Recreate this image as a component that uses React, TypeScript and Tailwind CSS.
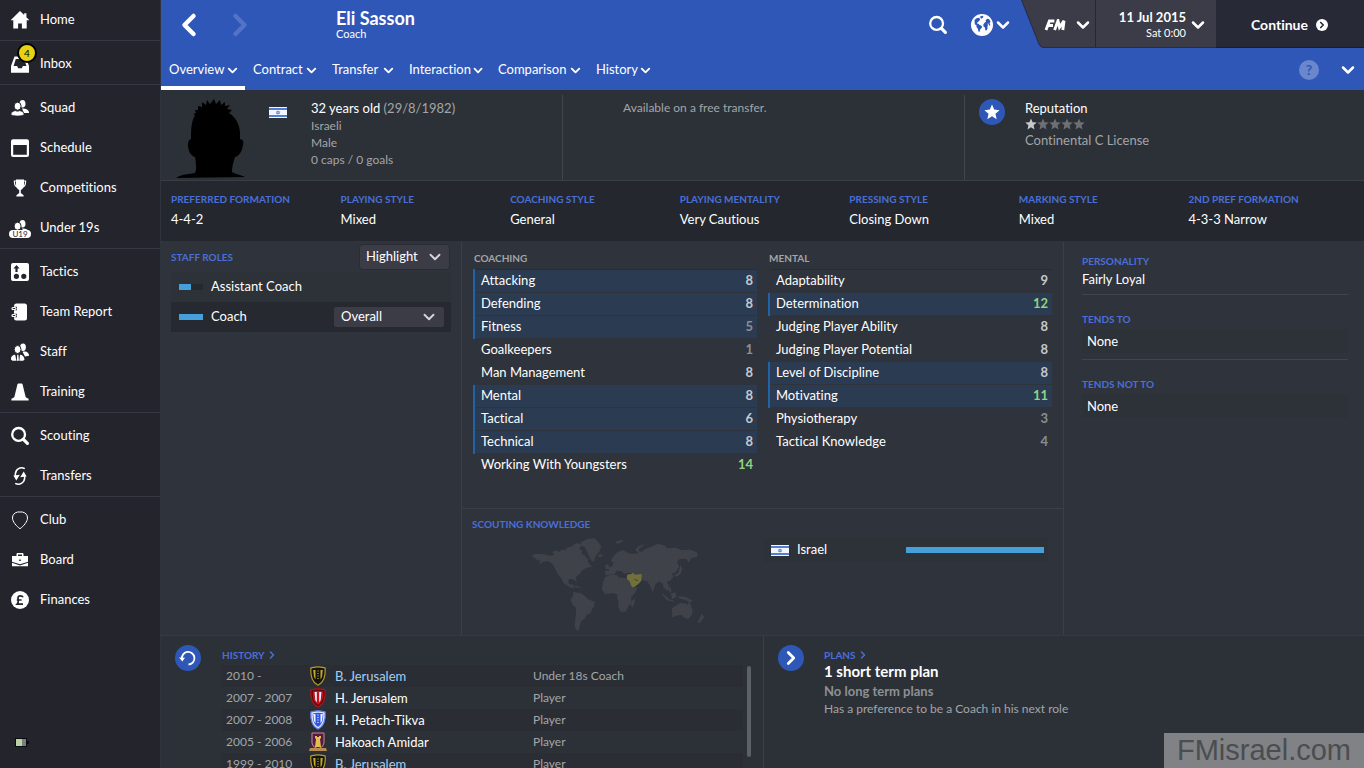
import type { ReactNode } from "react";
import { ChevronDown, ChevronLeft, ChevronRight } from "lucide-react";
import { clsx } from "clsx";

const heading = "text-[10px] leading-4 font-bold uppercase text-[#4a6fd8]";

function Icon({ children, className }: { children: ReactNode; className?: string }) {
  return <svg viewBox="0 0 20 20" fill="currentColor" aria-hidden="true" className={clsx("h-5 w-5 shrink-0", className)}>{children}</svg>;
}

const icons = {
  home: <Icon><path d="M10 1 .6 10.3h2.7V18.6h4.8v-5h3.8v5h4.8v-8.3h2.7L16.4 7.200V3.200h-2.200v1.900z" /></Icon>,
  inbox: <Icon><path fillRule="evenodd" d="M4.500 2.500h11l3.500 9.500v6.800H1V12zM5.800 5 3.600 12h3.600l.9 2.300h3.800l.9-2.300h3.600L14.200 5z" /></Icon>,
  squad: <Icon><ellipse cx="12.500" cy="5.700" rx="3" ry="3.800" /><path d="M12 10.500c4 0 7.200 1.400 7 4.500h-5z" /><ellipse cx="7.600" cy="8.200" rx="3.500" ry="4" stroke="#24242d" /><path stroke="#24242d" strokeWidth=".6" d="M1 16.200c0-2.200 3-3.500 4.800-3.500.7.700 2.700.7 3.400 0 2.500.2 4.800 1.500 4.800 3.500 0 2.300-13 2.300-13 0Z" /></Icon>,
  schedule: <Icon><path fillRule="evenodd" d="M3 1.300h14a2 2 0 0 1 2 2V17a2 2 0 0 1-2 2H3a2 2 0 0 1-2-2V3.300a2 2 0 0 1 2-2zM3.200 7v9.700h13.600V7z" /></Icon>,
  trophy: <Icon><path d="M6 1.500h8v5.200c0 3-1.700 4.500-3.200 5.200v3.200l2.800 2.100v1.300H6.400v-1.300l2.800-2.100v-3.200C7.700 11.200 6 9.700 6 6.700z" /><path d="M6 3H4.400c0 3.500.7 5.500 2.600 5.800M14 3h1.600c0 3.500-.7 5.500-2.600 5.800" fill="none" stroke="currentColor" strokeWidth="1.200" /></Icon>,
  tactics: <Icon><path fillRule="evenodd" d="M3 1h14a2 2 0 0 1 2 2v14a2 2 0 0 1-2 2H3a2 2 0 0 1-2-2V3a2 2 0 0 1 2-2zm3.500 2L3.400 6.500h2V10h2.200V6.500h2zM6.400 11.700a2.600 2.600 0 1 0 0 5.200 2.600 2.600 0 0 0 0-5.200zm7.400 0a2.600 2.600 0 1 0 0 5.200 2.600 2.600 0 0 0 0-5.200z" /></Icon>,
  report: <Icon><rect x="4" y="1.500" width="13" height="17" rx="2.500" /><g fill="none" stroke="#24242d" strokeWidth="3.600"><path d="M2 6.500h5M2 13.500h5" /></g><g fill="none" stroke="currentColor" strokeWidth="1.200"><rect x="2" y="5.500" width="4" height="2" rx="1" /><rect x="2" y="12.500" width="4" height="2" rx="1" /></g></Icon>,
  staff: <Icon><ellipse cx="13" cy="5.200" rx="2.900" ry="3.700" /><path d="M12.500 9.700c4-1 6.800 1.400 6.500 4l-4 .8z" /><ellipse cx="7.600" cy="7.500" rx="3.400" ry="4" stroke="#24242d" /><path d="M1 17.500c-.2-3.200 2-4.800 4.200-4.800L6.400 18.800H2.500zM7.200 12.700h1.200l.5 6.100H6.800zM10 12.700c2.500 0 4.500 2 4.500 5L13 18.800H9.300z" /></Icon>,
  training: <Icon><path d="M8.600 1.600h2.800c.7 0 1 .4 1.200 1L15.400 14c.2.900.6 1.600 1.500 1.900l1.700.8v1.800H1.400v-1.800l1.700-.8c.9-.3 1.300-1 1.500-1.900L7.400 2.600c.2-.6.500-1 1.200-1z" /></Icon>,
  search: <Icon><g fill="none" stroke="currentColor"><circle cx="8.600" cy="8.400" r="6.400" strokeWidth="2.300" /><path d="m13.400 13.400 4 4" strokeWidth="3.200" strokeLinecap="round" /></g></Icon>,
  transfers: <Icon><g fill="none" stroke="currentColor" strokeWidth="1.500"><path d="M14.800 2.700C10.500.3 5.600 3 5.300 8.200c0 1 .1 1.800.4 2.800" /><path d="M5.200 17.300c4.300 2.400 9.200-.3 9.500-5.500 0-1-.1-1.800-.4-2.800" /></g><path d="m3.400 9.500 2.900 5 3.500-5.700zM16.600 10.500l-2.900-5-3.500 5.700z" /></Icon>,
  club: <Icon><path d="M7.500 2h5C16 3 17.500 5 17.500 8c0 3.500-3.800 8.200-7.500 10.700C6.300 16.200 2.500 11.500 2.500 8c0-3 1.500-5 5-6z" fill="none" stroke="currentColor" /></Icon>,
  board: <Icon><path fillRule="evenodd" d="M6.500 4.200c0-.7.500-1.200 1.200-1.200h4.600c.7 0 1.200.500 1.200 1.200V6H18v5.800l-8 2.500-8-2.500V6h4.500zm1.500.4V6h4V4.600zM9.200 9.500v1.600h1.600V9.500z" /><path d="m2 12.800 8 2.600 8-2.600v3.400H2z" /></Icon>,
  finances: <Icon><circle cx="10" cy="10" r="9" /><path d="M13 7.200c-.6-1.500-4.800-2-5 .6 0 1.800 1.100 4.500-.8 6.400H13M6.800 10h4.800" fill="none" stroke="#24242d" strokeWidth="1.700" /></Icon>,
};

const menu: { label: string; icon: ReactNode; badge?: string; tag?: string }[][] = [
  [{ label: "Home", icon: icons.home }],
  [{ label: "Inbox", icon: icons.inbox, badge: "4" }],
  [
    { label: "Squad", icon: icons.squad },
    { label: "Schedule", icon: icons.schedule },
    { label: "Competitions", icon: icons.trophy },
    { label: "Under 19s", icon: icons.squad, tag: "U19" },
  ],
  [
    { label: "Tactics", icon: icons.tactics },
    { label: "Team Report", icon: icons.report },
    { label: "Staff", icon: icons.staff },
    { label: "Training", icon: icons.training },
  ],
  [
    { label: "Scouting", icon: icons.search },
    { label: "Transfers", icon: icons.transfers },
  ],
  [
    { label: "Club", icon: icons.club },
    { label: "Board", icon: icons.board },
    { label: "Finances", icon: icons.finances },
  ],
];

const tabs = [
  { label: "Overview", width: "w-[84px]" },
  { label: "Contract", width: "w-[79px]" },
  { label: "Transfer", width: "w-[77px]" },
  { label: "Interaction", width: "w-[89px]" },
  { label: "Comparison", width: "w-[98px]" },
  { label: "History", width: "w-[70px]" },
];

const styles = [
  ["Preferred Formation", "4-4-2"],
  ["Playing Style", "Mixed"],
  ["Coaching Style", "General"],
  ["Playing Mentality", "Very Cautious"],
  ["Pressing Style", "Closing Down"],
  ["Marking Style", "Mixed"],
  ["2nd Pref Formation", "4-3-3 Narrow"],
];

type Attribute = { name: string; value: number; key?: boolean };

const coaching: Attribute[] = [
  { name: "Attacking", value: 8, key: true },
  { name: "Defending", value: 8, key: true },
  { name: "Fitness", value: 5, key: true },
  { name: "Goalkeepers", value: 1 },
  { name: "Man Management", value: 8 },
  { name: "Mental", value: 8, key: true },
  { name: "Tactical", value: 6, key: true },
  { name: "Technical", value: 8, key: true },
  { name: "Working With Youngsters", value: 14 },
];

const mental: Attribute[] = [
  { name: "Adaptability", value: 9 },
  { name: "Determination", value: 12, key: true },
  { name: "Judging Player Ability", value: 8 },
  { name: "Judging Player Potential", value: 8 },
  { name: "Level of Discipline", value: 8, key: true },
  { name: "Motivating", value: 11, key: true },
  { name: "Physiotherapy", value: 3 },
  { name: "Tactical Knowledge", value: 4 },
];

const history = [
  { years: "2010 -", club: "B. Jerusalem", role: "Under 18s Coach", crest: "black", link: true },
  { years: "2007 - 2007", club: "H. Jerusalem", role: "Player", crest: "red" },
  { years: "2007 - 2008", club: "H. Petach-Tikva", role: "Player", crest: "blue" },
  { years: "2005 - 2006", club: "Hakoach Amidar", role: "Player", crest: "castle" },
  { years: "1999 - 2010", club: "B. Jerusalem", role: "Player", crest: "black", link: true },
];

function Sidebar() {
  return (
    <nav className="w-[161px] shrink-0 flex flex-col bg-[#24242d] border-r border-[#30343d]">
      {menu.map((group, i) => (
        <div key={i} className={clsx(i > 0 && "border-t border-[#363944] pt-[3px]")}>
          {group.map((item) => (
            <a key={item.label} href="#" className="flex h-10 items-center gap-2.5 pl-2.5 text-[13px] text-white">
              <span className="relative">
                {item.icon}
                {item.badge && <span className="absolute -top-[11px] left-[7px] h-5 w-5 rounded-full border-2 border-black bg-[#e6d212] text-center text-[10px] leading-4 text-black">{item.badge}</span>}
                {item.tag && <span className="absolute top-3 -left-px h-2 w-[22px] rounded-full bg-white text-center text-[8px] leading-2 text-[#24242d]">{item.tag}</span>}
              </span>
              {item.label}
            </a>
          ))}
        </div>
      ))}
      <svg viewBox="0 0 15 10" aria-hidden="true" className="mt-auto mb-5 ml-[15px] h-2.5 w-[15px]">
        <path d="M0 0h12v3h2v3h-2v3H0z" fill="#0b0b10" />
        <path d="M1 1h6v7H1z" fill="#b9d2a4" />
        <path d="M7 1h4v7H7z" fill="#777f80" />
      </svg>
    </nav>
  );
}

function Globe() {
  return (
    <svg viewBox="0 0 22 22" aria-hidden="true" className="h-[22px] w-[22px]">
      <circle cx="11" cy="11" r="11" fill="#fff" />
      <g fill="#2f57b7">
        <path d="m3.500 6 2-1.800 2.500-.4 1.200 1.500-1 1.700L6.800 8l-1 1.500 1.700.2.800 1 2.700 1.300-.3 2-1.600 1.500-.6 2.500-1-.4-.8-3.100-1.300-1.600.2-1.500-1.800-1.200z" />
        <path d="m9 2.500 2.700-.8L12.500 3l-1.800 1.800-1.200-.7z" />
        <path d="m14 8.300 1-.3-.4-1.500 1.500-1.700 1.900.3 1.600 2.700-1 1.200.8 2.200-1.300.3-.7-2-1.200.3.900 1.300-.7 1.600.2 1.700-1.400 2.300-1-.8-.2-2.300-1.400-.8-.3-2.300z" />
      </g>
    </svg>
  );
}

function Header() {
  return (
    <header className="relative bg-[#2f57b7] text-white">
      <div className="flex h-[50px] items-center">
        <button aria-label="Back" className="ml-2.5"><ChevronLeft size={36} strokeWidth={3} /></button>
        <button aria-label="Forward" className="ml-[15px] text-[#5373c8]"><ChevronRight size={36} strokeWidth={3} /></button>
        <div className="ml-[78px] pb-0.5">
          <h1 className="text-lg leading-5 font-bold">Eli Sasson</h1>
          <p className="text-[11px] leading-3">Coach</p>
        </div>
        <div className="ml-auto flex items-center">
          <button aria-label="Search" className="mr-[23px]">{icons.search}</button>
          <button aria-label="World" className="flex items-center"><Globe /><ChevronDown size={20} strokeWidth={3} /></button>
        </div>
        <div className="relative ml-2 flex h-12 w-[343px] self-start">
          <svg viewBox="0 0 195 48" preserveAspectRatio="none" aria-hidden="true" className="absolute top-0 left-0 h-12 w-[195px]">
            <path d="M0 0h195v48H23q-4 0-6-5z" fill="#262b4b" />
            <path d="M1 0h194v47H23q-3 0-5-4z" fill="#3b3c47" />
          </svg>
          <button aria-label="FM menu" className="relative flex h-[47px] w-[75px] items-center justify-end gap-[5px] border-r border-[#262731] pt-[3px] pr-0.5">
            <svg viewBox="0 0 24 12" aria-hidden="true" className="h-3 w-6"><g fill="none" stroke="#fff" strokeWidth="2.900"><path d="M2 11 5.400 2h5M3.800 6.500H9M10.600 11 14 1.800l1.500 6.500 4.500-6.500L18.800 11" /></g></svg>
            <ChevronDown size={20} strokeWidth={3} />
          </button>
          <button className="relative flex h-[47px] w-[119px] items-center justify-end gap-0.5 pt-0.5 pr-[7px]">
            <span className="text-right">
              <b className="block text-[13px] leading-4">11 Jul 2015</b>
              <span className="block text-[11px] leading-4">Sat 0:00</span>
            </span>
            <ChevronDown size={20} strokeWidth={3} />
          </button>
          <button className="flex flex-1 items-center justify-center gap-2 border-b border-[#171c36] bg-[#272936] pt-[3px] text-sm font-bold">
            Continue
            <span className="grid h-3 w-3 place-items-center rounded-full bg-white text-[#272936]"><ChevronRight size={10} strokeWidth={4} /></span>
          </button>
        </div>
      </div>
      <div className="flex h-10 items-center">
        {tabs.map((tab, i) => (
          <button key={tab.label} className={clsx("flex h-10 items-center justify-between border-b-4 pt-1 pr-[5px] pl-2 text-[13px]", tab.width, i === 0 ? "border-white" : "border-transparent")}>
            {tab.label}
            <ChevronDown size={15} strokeWidth={3} />
          </button>
        ))}
        <button aria-label="Help" className="ml-auto h-5 w-5 rounded-full bg-[#6a87cd] text-sm leading-5 font-bold text-[#2f57b7]">?</button>
        <button aria-label="More" className="mr-1.5 ml-[19px]"><ChevronDown size={20} strokeWidth={3} /></button>
      </div>
    </header>
  );
}

function Flag() {
  return (
    <svg viewBox="0 0 18 11" role="img" aria-label="Israel" className="h-[11px] w-[18px] shrink-0">
      <path d="M0 0h18v11H0z" fill="#f2f6ff" />
      <path d="M0 1h18v2H0zM0 8h18v2H0z" fill="#587fcf" />
      <path d="m9 3.800 1.600 2.700H7.400zM9 7.300 7.400 4.700h3.200z" fill="none" stroke="#4a74cf" strokeWidth=".6" />
    </svg>
  );
}

function Star({ className }: { className: string }) {
  return <svg viewBox="0 0 12 12" fill="currentColor" aria-hidden="true" className={className}><path d="m6 .4 1.600 3.800 4.100.4-3.100 2.700.9 4.100L6 9.200l-3.500 2.200.9-4.100L.3 4.600l4.100-.4z" /></svg>;
}

function Portrait() {
  return (
    <svg viewBox="0 0 70 80" role="img" aria-label="Eli Sasson" className="h-20 w-[70px] shrink-0">
      <path d="M0 79c5-4 14-4 19-5 2-4 1-10 0-16-4-1-7-6-7-12 0-4 1-5 3-6 0-8 0-17 4-24l-2-1 3-1-1-3 3 0 0-4 4 1 0-5 4 3 1-5 3 4 4-5 2 5 4-4 1 5 4-3 0 4 5-1-3 4 5 1-3 3c8 5 12 14 11 26 3 1 4 2 3 6-1 7-4 11-8 12-2 6-3 10-3 15 3 2 9 3 13 5z" fill="#000" />
    </svg>
  );
}

function Profile() {
  return (
    <section className="flex h-[91px] border-b border-[#393e45] bg-[#2c3137] text-xs text-[#a3a5a8]">
      <div className="flex w-[401px] items-start">
        <div className="mt-[9px] ml-[15px]"><Portrait /></div>
        <div className="mt-[17px] ml-[23px]"><Flag /></div>
        <div className="mt-2.5 ml-6">
          <p className="text-[13px] leading-[17px]"><span className="text-white">32 years old</span> (29/8/1982)</p>
          <p className="leading-[17px]">Israeli</p>
          <p className="leading-[17px]">Male</p>
          <p className="leading-[17px]">0 caps / 0 goals</p>
        </div>
      </div>
      <div className="mt-[5px] flex-1 border-l border-[#40454c] pt-[5px] pl-[60px]"><p className="leading-4">Available on a free transfer.</p></div>
      <div className="mt-[5px] flex w-[400px] items-start border-l border-[#40454c]">
        <span className="mt-1 ml-[14px] grid h-[26px] w-[26px] place-items-center rounded-full bg-[#2f57b7] text-white"><Star className="h-4 w-4" /></span>
        <div className="ml-5 pt-[5px] text-[13px] leading-4">
          <p className="text-white">Reputation</p>
          <div className="flex h-4 items-center" role="img" aria-label="1 of 5 stars">
            {[0, 1, 2, 3, 4].map((n) => <Star key={n} className={clsx("h-3 w-3", n === 0 ? "text-[#c8c9cb]" : "text-[#6c6f74]")} />)}
          </div>
          <p>Continental C License</p>
        </div>
      </div>
    </section>
  );
}

function StaffRoles() {
  return (
    <section className="w-[301px] shrink-0 border-r border-[#393e47] px-2.5 pt-0.5">
      <div className="flex h-[26px] items-center justify-between">
        <h2 className={heading}>Staff Roles</h2>
        <div className="relative mr-px w-[91px]">
          <select aria-label="Highlight" className="block h-[26px] w-full appearance-none rounded border border-[#2a2b34] bg-[#3c3c47] pl-1.5 text-[13px] text-white">
            <option>Highlight</option>
          </select>
          <ChevronDown size={18} strokeWidth={2.5} className="pointer-events-none absolute top-1 right-1.5 text-[#d5d6da]" />
        </div>
      </div>
      <div className="mt-0.5 flex h-[30px] items-center bg-[#2d3138] pl-2 text-[13px] text-white">
        <span className="mr-2 h-1.5 w-6 bg-[#25292f]"><span className="block h-1.5 w-3 bg-[#459fdb]" /></span>
        Assistant Coach
      </div>
      <div className="flex h-[30px] items-center bg-[#262a30] pl-2 text-[13px] text-white">
        <span className="mr-2 h-1.5 w-6 bg-[#459fdb]" />
        Coach
        <div className="relative mr-[7px] ml-auto w-[110px]">
          <select aria-label="Coach role attribute" className="block h-5 w-full appearance-none rounded-xs bg-[#3c3c47] pl-[7px] text-[13px] text-white">
            <option>Overall</option>
          </select>
          <ChevronDown size={18} strokeWidth={2.5} className="pointer-events-none absolute top-px right-1.5 text-[#d5d6da]" />
        </div>
      </div>
    </section>
  );
}

function AttributeTable({ title, rows }: { title: string; rows: Attribute[] }) {
  return (
    <table className="w-full self-start border-collapse text-[13px]">
      <thead>
        <tr className="h-5 border-b border-[#282c33]"><th colSpan={2} className="p-0 pb-0.5 text-left text-[10px] leading-4 font-bold text-[#a3a5a8] uppercase">{title}</th></tr>
      </thead>
      <tbody>
        {rows.map((row) => (
          <tr key={row.name} className={clsx("h-[23px] border-b border-[#2f333b]", row.key && "bg-[#2a3b52]")}>
            <td className={clsx("border-l-2 p-0 pb-0.5 pl-1.5 leading-5 text-white", row.key ? "border-l-[#2163a4]" : "border-l-transparent")}>{row.name}</td>
            <td className={clsx("p-0 pr-1 pb-0.5 text-right leading-5 font-bold", row.value > 10 ? "text-[#8fd57f]" : row.value > 5 ? "text-[#c6c9cd]" : "text-[#8b8f95]")}>{row.value}</td>
          </tr>
        ))}
      </tbody>
    </table>
  );
}

function WorldMap() {
  return (
    <svg viewBox="0 0 555 294" role="img" aria-label="World map" className="h-[98px] w-[185px]">
      <defs>
        <pattern id="dots" width="6" height="6" patternUnits="userSpaceOnUse">
          <path d="M0 0h6v6H0z" fill="#40444a" />
          <path d="M0 0h6v1H0zM0 0h1v6H0z" fill="#3a3e45" />
        </pattern>
      </defs>
      <g fill="url(#dots)">
        <path d="m20 62 10-5 25 0 18 5 16-2-8-10 15-4 6 6 8-8 14 2 0-8 16-3 12-10 14 1 4 8-8 6 10 8-3 8 12 6 4 10 6-2-3 10 12 15-18 4-12 8-8 12-7 4-3 8 4 7-5 1-7-8-14 2 0 10 6 7 8-4-1 8 7 7-8-1-12-6-14-10-8-16-10-12-8-17-8-13-12-8-14 2-18 10 10-12-12-4z" />
        <path d="m140 152 16 0 14 8-16-3zM168 22l20-10 20-2 14 14 6 10-5 16-10 10-7 20-8-4-9-20-8-18-14-8zM217 62l10-5 8 4-10 6z" />
        <path d="m145 170 10 3 14 2 13 10 6 8 20 7 0 12-8 12-4 10-12 6-6 12-9 5-4 12-4 14 3 4-10-3-5-10 2-20 3-34-12-12-5-14 8-12z" />
        <path d="m240 127 16-7 20 0 3 7 14 2 14 0 8 14 8 14 14 0-5 14-14 16 1 17-9 10-6 14-16 4-8-16 1-14-4-12 0-12-14-4-22 3-10-13 2-18zM328 189l2 10-6 16-6-1 1-12z" />
        <path d="m241 121-1-14 14 0-5-8 13-6 4-10-8-6 6-12 14-14 16-6 14 8 10 3 20 0 4-8 8 3 12-9 16-6 20-9 20 4 8 9 26-2 18 8 22-2 14 4 12 7-2 10-18 4-6 14-8-12-20 0-8 10 6 14-12 18-11 1 6 10-8 12-12 6 8 14-6 12-12-12-1-10-12-7-10 8-9 24-9-22-8-10-14-4-30-20-16-2-6 5-10-9-14-2-8 11zM240 92l8-5 8 14-14 2zM270 21l20-6 6 3-18 9zM330 45l10-11 20-6-17 12-3 12z" />
        <path d="m466 90 6 12-6 16-14 7-4-4 12-8zM414 176l18 16 14 5-1 3-20-5-14-18zM437 176l14-4 3 14-12 6zM460 184l22 2 22 12-10 4-14-8-18-4zM431 152l8 12-1 10-8-10zM441 220l10-7 15-9 14 1 8 4 4-9 6 12 5 15-3 14-10 10-12-3-8-9-18 3-10 5zM530 236l8 10-12 16-9 2z" />
      </g>
      <path d="m306 119 12-2 6-4 6 6 20-2-1 20-9 10-12 9-7 1-8-18-7-8z" fill="#72703a" />
      <path d="m327 131 8 3 7 1-6 3-8-4z" fill="#45462f" />
    </svg>
  );
}

function Crest({ kind }: { kind: string }) {
  if (kind === "castle") {
    return (
      <svg viewBox="0 0 18 20" aria-hidden="true" className="h-5 w-[18px]">
        <path d="M3 1h12v10q0 4-6 6-6-2-6-6z" fill="#5c1745" stroke="#c08a9d" />
        <path d="M6 6V4h2v1h2V4h2v2l-1 1 1 8H6l1-8z" fill="#e0bf51" />
        <path d="M1 16h16l1 3H0z" fill="#b78d55" />
      </svg>
    );
  }
  const edge = kind === "black" ? "#b69d2b" : kind === "red" ? "#b5141c" : "#5a78ec";
  const base = kind === "black" ? "#15150f" : kind === "red" ? "#c2141c" : "#2f55e0";
  const ring = kind === "black" ? "#15150f" : kind === "red" ? "#5d080d" : "#dfe6ff";
  const stripe = kind === "black" ? "#c2a82b" : "#eef1ff";
  return (
    <svg viewBox="0 0 18 20" aria-hidden="true" className="h-5 w-[18px]">
      <path d="M9 .8c3 0 5 .7 7.200 1.200.4 7-.2 14-7.200 17.200C2 16 1.400 9 1.800 2 4 1.500 6 .8 9 .8z" fill={ring} stroke={edge} strokeWidth="1.200" />
      <path d="M9 2.800c2 0 3.700.3 5.200.7.200 6.200-.6 10.500-5.200 13.500C4.400 14 3.600 9.700 3.800 3.500 5.300 3.100 7 2.800 9 2.800z" fill={base} />
      {kind === "red" ? (
        <path d="M5.600 4h2.200v10.500L6.300 12zM12.400 4h-2.200v10.500l1.500-2.500z" fill={stripe} />
      ) : (
        <>
          <path d="M4.200 4h2.300v9.500L5 11zM13.800 4h-2.300v9.500L13 11z" fill={stripe} />
          <path d="M8 4.500h2v1H8zM8 7h2v1H8zM8 9.500h2v1H8zM8 12h2v1H8z" fill={stripe} opacity=".6" />
        </>
      )}
    </svg>
  );
}

export default function App() {
  return (
    <div className="flex h-screen overflow-hidden bg-[#2f333b] font-[Lato,'Liberation_Sans',sans-serif] text-white [font-variant-ligatures:none]">
      <Sidebar />
      <main className="flex min-w-0 flex-1 flex-col">
        <Header />
        <Profile />
        <dl className="grid h-[61px] shrink-0 grid-cols-7 border-b border-[#30353c] bg-[#24282e] pt-2.5 pr-1.5 pl-2.5">
          {styles.map(([label, value]) => (
            <div key={label}>
              <dt className={heading}>{label}</dt>
              <dd className="mt-0.5 text-[13px] leading-5">{value}</dd>
            </div>
          ))}
        </dl>
        <div className="flex h-[393px] shrink-0">
          <StaffRoles />
          <div className="flex flex-1 flex-col">
            <section className="grid flex-1 grid-cols-2 gap-[11px] px-[11px] pt-[7px]">
              <AttributeTable title="Coaching" rows={coaching} />
              <AttributeTable title="Mental" rows={mental} />
            </section>
            <section className="flex h-[127px] border-t border-[#393e47]">
              <div className="flex-1 pl-2.5 pt-[7px]">
                <h2 className={heading}>Scouting Knowledge</h2>
                <div className="ml-[53px] mt-[3px]"><WorldMap /></div>
              </div>
              <div className="mt-[29px] mr-[15px] flex h-6 w-[284px] items-center bg-[#2d3138] pr-1 pl-[7px] text-[13px]">
                <Flag />
                <span className="ml-2 flex-1">Israel</span>
                <span className="h-1.5 w-[138px] bg-[#459fdb]" />
              </div>
            </section>
          </div>
          <section className="w-[301px] shrink-0 border-l border-[#393e47] pt-[11px] pr-4 pl-[18px] text-[13px]">
            <h2 className={heading}>Personality</h2>
            <p className="border-b border-[#41454d] pt-px pb-[5px] leading-[19px]">Fairly Loyal</p>
            <h2 className={clsx(heading, "mt-4")}>Tends To</h2>
            <div className="border-b border-[#41454d] pt-0.5 pb-1.5"><p className="bg-[#2d3138] pl-[5px] leading-6">None</p></div>
            <h2 className={clsx(heading, "mt-4")}>Tends Not To</h2>
            <p className="mt-0.5 bg-[#2d3138] pl-[5px] leading-6">None</p>
          </section>
        </div>
        <div className="flex min-h-0 flex-1 border-t border-[#363b43] bg-[#2c3137]">
          <section className="flex w-[603px] shrink-0 border-r border-[#393e47]">
            <span className="mt-[9px] ml-[14px] grid h-[26px] w-[26px] shrink-0 place-items-center rounded-full bg-[#2f57b7]">
              <svg viewBox="0 0 20 20" aria-hidden="true" className="h-5 w-5"><path d="M4 11.500A6.300 6.300 0 1 1 10.500 16.500" fill="none" stroke="#fff" strokeWidth="1.800" /><path d="m1 9.500 6 .2-2.700 3.800z" fill="#fff" /></svg>
            </span>
            <div className="ml-[21px] flex min-w-0 flex-1 flex-col pt-[11px]">
              <a href="#" className={clsx(heading, "flex items-center gap-px")}>History <ChevronRight size={12} strokeWidth={3} /></a>
              <div className="flex min-h-0 flex-1 pt-0.5">
                <div className="flex-1 overflow-hidden">
                  <table className="w-full table-fixed text-left">
                    <tbody>
                      {history.map((row, i) => (
                        <tr key={i} className={clsx("h-[22px]", i % 2 === 0 && "bg-[#2a2e34]")}>
                          <td className="w-[86px] p-0 pl-1 text-xs text-[#a3a5a8]">{row.years}</td>
                          <td className="w-[27px] p-0 pl-px"><Crest kind={row.crest} /></td>
                          <td className={clsx("w-[198px] p-0 text-[13px] leading-5", row.link ? "text-[#a5cdf3]" : "text-white")}>{row.club}</td>
                          <td className="p-0 text-xs text-[#a3a5a8]">{row.role}</td>
                        </tr>
                      ))}
                    </tbody>
                  </table>
                </div>
                <span className="mt-px mr-3 ml-1 h-[91px] w-1 rounded-full bg-[#5c6067]" />
              </div>
            </div>
          </section>
          <section className="relative flex flex-1">
            <span className="mt-[9px] ml-[14px] grid h-[26px] w-[26px] shrink-0 place-items-center rounded-full bg-[#2f57b7]"><ChevronRight size={22} strokeWidth={3} /></span>
            <div className="ml-5 pt-[11px]">
              <a href="#" className={clsx(heading, "flex items-center gap-px")}>Plans <ChevronRight size={12} strokeWidth={3} /></a>
              <p className="text-[15px] leading-4 font-bold">1 short term plan</p>
              <p className="mt-0.5 text-[13px] leading-5 font-bold text-[#8d9094]">No long term plans</p>
              <p className="text-xs leading-4 text-[#a3a5a8]">Has a preference to be a Coach in his next role</p>
            </div>
            <div className="absolute right-0 bottom-0 h-[35px] w-[200px] bg-[#808285] text-center font-['Liberation_Sans',sans-serif] text-[29px] leading-[35px] text-[#4b4d50]">FMisrael.com</div>
          </section>
        </div>
      </main>
    </div>
  );
}
